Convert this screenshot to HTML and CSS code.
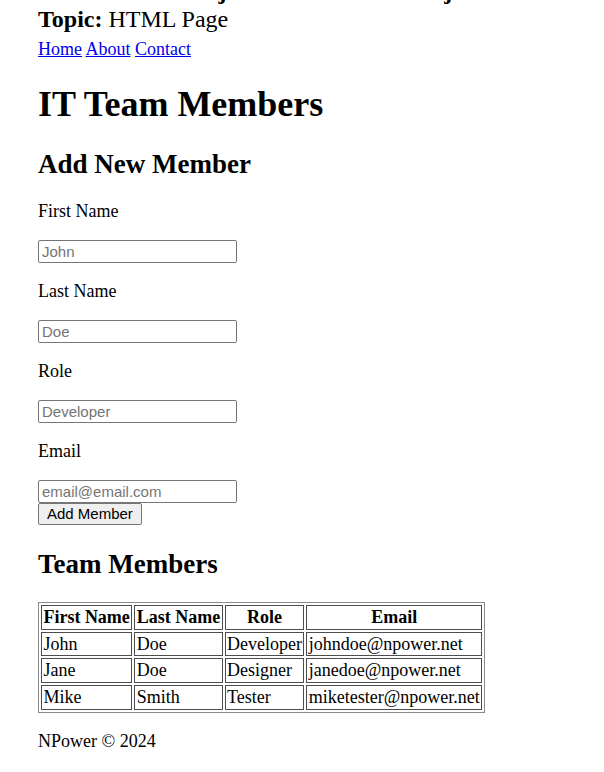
FILE: index.html
```html
<!DOCTYPE html>
<html lang="en">
<head>
<meta charset="utf-8">
<title>IT Team Members</title>
<link rel="stylesheet" href="styles.css">
</head>
<body>
<header class="intro">
  <p class="project">NPower Mini Project: IT Team Site Project</p>
  <p class="topic"><strong>Topic:</strong> HTML Page</p>
  <nav class="nav"><a href="#">Home</a> <a href="#">About</a> <a href="#">Contact</a></nav>
</header>
<main>
  <h1 class="title">IT Team Members</h1>
  <h2 class="section section-first">Add New Member</h2>
  <form class="form">
    <p class="label"><label for="first">First Name</label></p>
    <input class="field" id="first" type="text" placeholder="John">
    <p class="label"><label for="last">Last Name</label></p>
    <input class="field" id="last" type="text" placeholder="Doe">
    <p class="label"><label for="role">Role</label></p>
    <input class="field" id="role" type="text" placeholder="Developer">
    <p class="label"><label for="email">Email</label></p>
    <input class="field" id="email" type="email" placeholder="email@email.com">
    <button class="btn" type="button">Add Member</button>
  </form>
  <h2 class="section section-second">Team Members</h2>
  <table class="team">
    <thead>
      <tr><th>First Name</th><th>Last Name</th><th>Role</th><th>Email</th></tr>
    </thead>
    <tbody>
      <tr><td>John</td><td>Doe</td><td>Developer</td><td>johndoe@npower.net</td></tr>
      <tr><td>Jane</td><td>Doe</td><td>Designer</td><td>janedoe@npower.net</td></tr>
      <tr><td>Mike</td><td>Smith</td><td>Tester</td><td>miketester@npower.net</td></tr>
    </tbody>
  </table>
</main>
<footer class="footer"><p class="copy">NPower © 2024</p></footer>
</body>
</html>
```

FILE: styles.css
```css
html, body {
  background: #ffffff;
}
body {
  margin: 0;
  padding: 0 0 0 38px;
  font-family: "Liberation Serif", "Times New Roman", serif;
  font-size: 18px;
  line-height: 21px;
  color: #000000;
}
.project {
  margin: -23px 0 0;
  font-size: 24px;
  line-height: 28px;
  font-weight: bold;
}
.topic {
  margin: 0;
  font-size: 24px;
  line-height: 28px;
}
.nav {
  margin-top: 6px;
  font-size: 18px;
  line-height: 21px;
}
.nav a {
  color: #0000ee;
  text-decoration: underline;
}
.title {
  margin: 24px 0 0;
  font-size: 36px;
  line-height: 41px;
  font-weight: bold;
}
.section {
  font-size: 27px;
  line-height: 31px;
  font-weight: bold;
}
.section-first {
  margin: 24px 0 0;
}
.section-second {
  margin: 24px 0 22px;
}
.form {
  margin: 0;
}
.label {
  margin: 18px 0;
  line-height: 21px;
}
.section-first + .form .label:first-child {
  margin-top: 21px;
}
.field {
  display: block;
  box-sizing: border-box;
  width: 199px;
  height: 23px;
  margin: 0;
  padding: 1px 3px;
  border: 1px solid #767676;
  border-radius: 2px;
  font-family: "Liberation Sans", Arial, sans-serif;
  font-size: 15px;
  color: #000;
  background: #fff;
}
.field::placeholder {
  color: #757575;
}
.btn {
  display: block;
  box-sizing: border-box;
  height: 22px;
  margin: 0;
  padding: 0 8px;
  border: 1px solid #767676;
  border-radius: 2px;
  background: #efefef;
  color: #000;
  font-family: "Liberation Sans", Arial, sans-serif;
  font-size: 15px;
  line-height: 18px;
}
.team {
  border: 1px solid #8a8a8a;
  border-spacing: 2px;
  font-size: 18px;
  line-height: 20.7px;
}
.team th,
.team td {
  border: 1px solid #4d4d4d;
  padding: 1px 1.4px;
}
.team th {
  font-weight: bold;
  text-align: center;
}
.team td {
  text-align: left;
}
.copy {
  margin: 18px 0;
}
```
